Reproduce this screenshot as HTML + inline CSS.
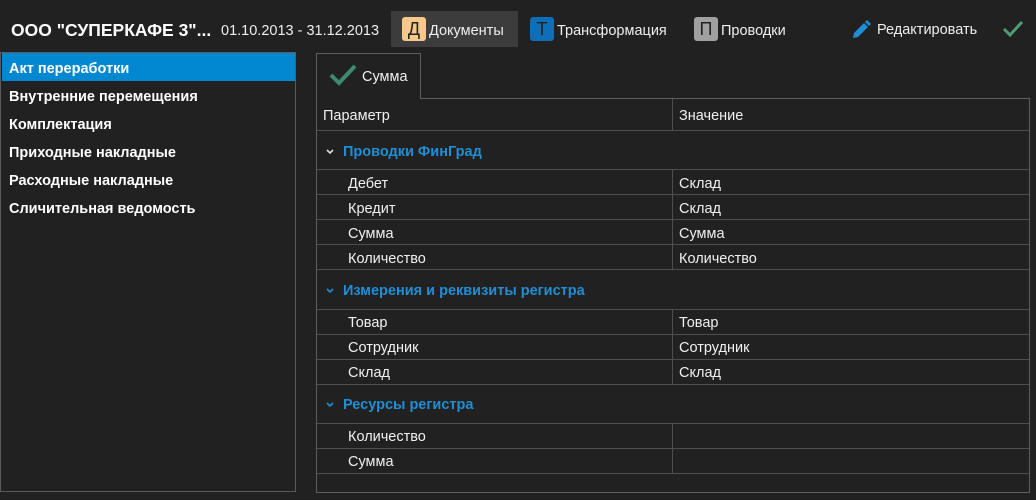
<!DOCTYPE html>
<html><head><meta charset="utf-8"><style>
*{margin:0;padding:0;box-sizing:border-box}
body{width:1036px;height:500px;background:#212121;font-family:"Liberation Sans","DejaVu Sans",sans-serif;color:#f0f0f0;position:relative;overflow:hidden}
.a{position:absolute;white-space:nowrap}
.side{position:absolute;left:0;top:52px;width:296px;height:440px;border:1px solid #5a5a5a;background:#212121}
.si{position:absolute;left:1px;width:293px;height:28px;font-weight:bold;font-size:14.5px;padding-left:7px;padding-top:2px;line-height:28px;color:#fff}
.box{position:absolute;left:316px;top:98px;width:714px;height:395px;border:1px solid #5e5e5e}
.hl{position:absolute;left:0;width:712px;height:1px;background:#4e4e4e}
.vl{position:absolute;left:355px;width:1px;background:#4e4e4e}
.t{position:absolute;font-size:14.5px;color:#f0f0f0;white-space:nowrap;margin-top:1px}
.g{position:absolute;left:26px;font-size:14.5px;font-weight:bold;color:#1e8fd6;margin-top:1px}
.chev{position:absolute;left:9px;width:8px;height:6px}
.ic{display:inline-block;width:24px;height:24px;border-radius:3px;text-align:center;line-height:24px;font-size:18px;color:#222;vertical-align:middle;margin-right:3px}
</style></head><body>
<div class="a" style="left:11px;top:20px;font-size:17.5px;font-weight:bold;color:#fff">ООО "СУПЕРКАФЕ 3"...</div>
<div class="a" style="left:221px;top:23px;font-size:14.5px;color:#eee">01.10.2013 - 31.12.2013</div>
<div class="a" style="left:391px;top:11px;width:127px;height:36px;background:#3c3c3c"></div>
<div class="a" style="left:402px;top:17px;font-size:14.5px;color:#eee"><span class="ic" style="background:#f6c98a">Д</span><span style="position:relative;top:2px">Документы</span></div>
<div class="a" style="left:530px;top:17px;font-size:14.5px;color:#eee"><span class="ic" style="background:#0d6fb8">Т</span><span style="position:relative;top:2px">Трансформация</span></div>
<div class="a" style="left:694px;top:17px;font-size:14.5px;color:#eee"><span class="ic" style="background:#a0a0a0">П</span><span style="position:relative;top:2px">Проводки</span></div>
<svg class="a" style="left:851px;top:20px" width="20" height="20" viewBox="0 0 20 20"><path d="M2 18 L3 13 L13 3 L17 7 L7 17 Z" fill="#1e8fd6"/><path d="M14 2 L16 0 L20 4 L18 6 Z" fill="#1e8fd6"/></svg>
<div class="a" style="left:877px;top:22px;font-size:14.5px;color:#eee">Редактировать</div>
<svg class="a" style="left:1002px;top:20px" width="22" height="18" viewBox="0 0 22 18"><path d="M2 9 L8 15 L20 2" stroke="#4e9a7a" stroke-width="3" fill="none"/></svg>

<div class="side">
<div class="si" style="top:0;background:#0288d1">Акт переработки</div>
<div class="si" style="top:28px">Внутренние перемещения</div>
<div class="si" style="top:56px">Комплектация</div>
<div class="si" style="top:84px">Приходные накладные</div>
<div class="si" style="top:112px">Расходные накладные</div>
<div class="si" style="top:140px">Сличительная ведомость</div>
</div>

<div class="a" style="left:316px;top:53px;width:105px;height:46px;border:1px solid #5e5e5e;border-bottom:none;background:#212121;z-index:2"></div>
<svg class="a" style="left:329px;top:63px;z-index:3" width="28" height="24" viewBox="0 0 28 24"><path d="M2 12 L10 20 L26 3" stroke="#3e8a6e" stroke-width="4" fill="none"/></svg>
<div class="a" style="left:362px;top:69px;font-size:14.5px;z-index:3">Сумма</div>

<div class="box">
<div class="t" style="left:6px;top:8px">Параметр</div>
<div class="t" style="left:362px;top:8px">Значение</div>
<div class="vl" style="top:0;height:32px"></div>
<div class="hl" style="top:31px"></div>

<svg class="chev" style="top:50px" viewBox="0 0 8 6"><path d="M1 1 L4 4 L7 1" stroke="#ddd" stroke-width="1.6" fill="none"/></svg>
<div class="g" style="top:44px">Проводки ФинГрад</div>
<div class="hl" style="top:70px"></div>
<div class="vl" style="top:70px;height:100px"></div>
<div class="t" style="left:31px;top:76px">Дебет</div><div class="t" style="left:362px;top:76px">Склад</div>
<div class="hl" style="top:95px"></div>
<div class="t" style="left:31px;top:101px">Кредит</div><div class="t" style="left:362px;top:101px">Склад</div>
<div class="hl" style="top:120px"></div>
<div class="t" style="left:31px;top:126px">Сумма</div><div class="t" style="left:362px;top:126px">Сумма</div>
<div class="hl" style="top:145px"></div>
<div class="t" style="left:31px;top:151px">Количество</div><div class="t" style="left:362px;top:151px">Количество</div>
<div class="hl" style="top:170px"></div>

<svg class="chev" style="top:189px" viewBox="0 0 8 6"><path d="M1 1 L4 4 L7 1" stroke="#1e8fd6" stroke-width="1.6" fill="none"/></svg>
<div class="g" style="top:183px">Измерения и реквизиты регистра</div>
<div class="hl" style="top:210px"></div>
<div class="vl" style="top:210px;height:75px"></div>
<div class="t" style="left:31px;top:215px">Товар</div><div class="t" style="left:362px;top:215px">Товар</div>
<div class="hl" style="top:235px"></div>
<div class="t" style="left:31px;top:240px">Сотрудник</div><div class="t" style="left:362px;top:240px">Сотрудник</div>
<div class="hl" style="top:260px"></div>
<div class="t" style="left:31px;top:265px">Склад</div><div class="t" style="left:362px;top:265px">Склад</div>
<div class="hl" style="top:285px"></div>

<svg class="chev" style="top:303px" viewBox="0 0 8 6"><path d="M1 1 L4 4 L7 1" stroke="#1e8fd6" stroke-width="1.6" fill="none"/></svg>
<div class="g" style="top:297px">Ресурсы регистра</div>
<div class="hl" style="top:324px"></div>
<div class="vl" style="top:324px;height:50px"></div>
<div class="t" style="left:31px;top:329px">Количество</div>
<div class="hl" style="top:349px"></div>
<div class="t" style="left:31px;top:354px">Сумма</div>
<div class="hl" style="top:374px"></div>
</div>
</body></html>
